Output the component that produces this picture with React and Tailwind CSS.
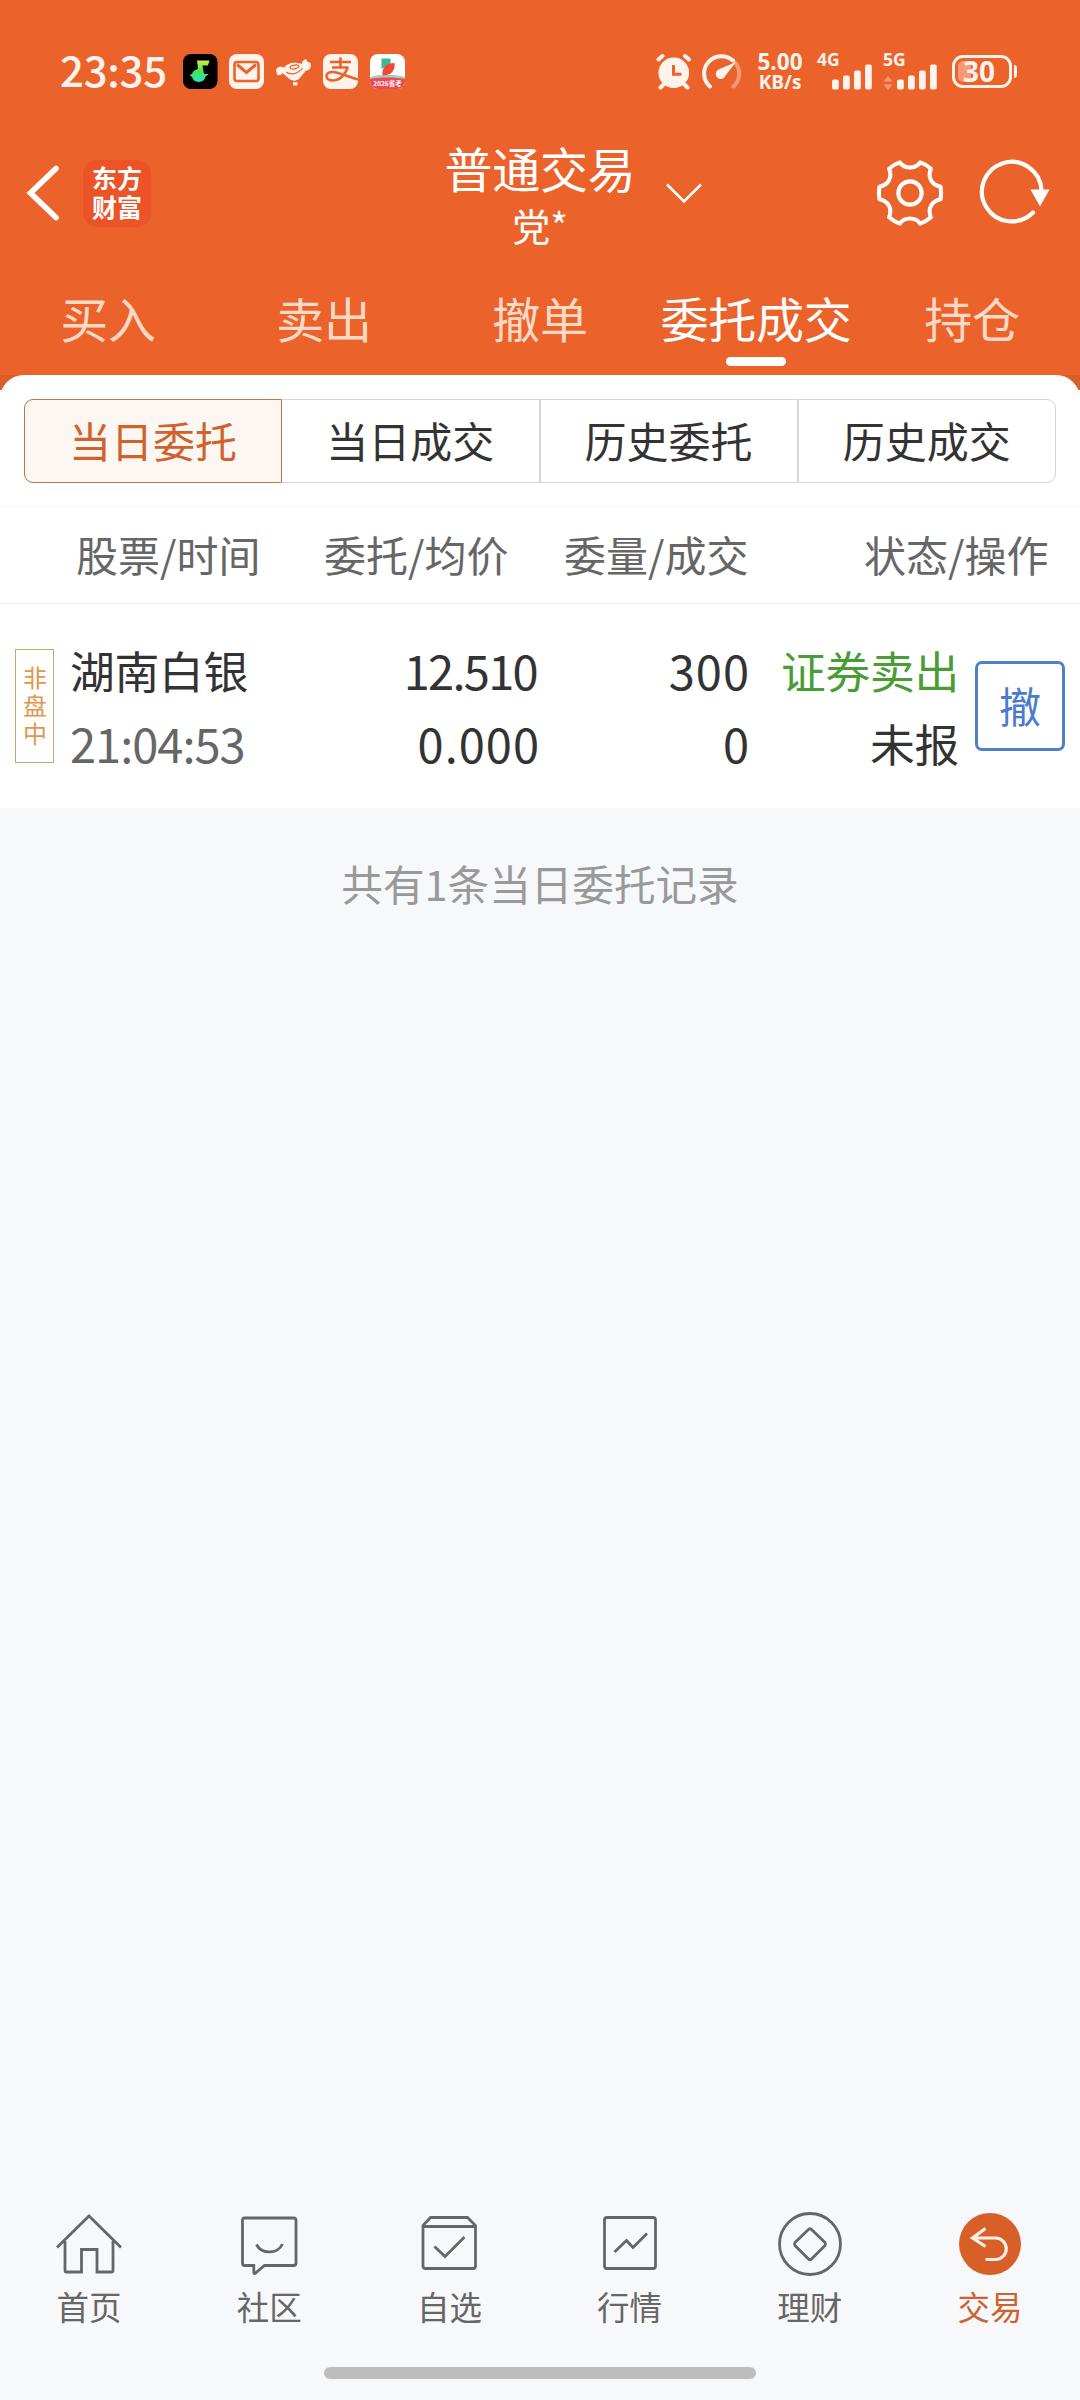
import React from "react";

const INK = "#fff3ec";

function SignalBars() {
  return (
    <svg width="40" height="26" viewBox="0 0 40 26" fill={INK}>
      <rect x="0" y="15.5" width="6.8" height="10" rx="2" />
      <rect x="11" y="11.5" width="6.8" height="14" rx="2" />
      <rect x="22" y="6.5" width="6.8" height="19" rx="2" />
      <rect x="33" y="0.5" width="6.8" height="25" rx="2" />
    </svg>
  );
}

function StatusBar() {
  return (
    <div className="flex h-[140px] justify-between pt-[50px] text-[#fff3ec]">
      <div className="flex h-[42px] items-center pl-[60px]">
        <span className="-mt-[5px] w-[123px] text-[42px] leading-[42px] font-medium tracking-[-0.3px]">23:35</span>
        <svg className="mr-[11px]" width="35" height="35" viewBox="0 0 35 35">
          <defs>
            <linearGradient id="note" x1="0" y1="0" x2="0" y2="1">
              <stop offset="0" stopColor="#d6ee3c" />
              <stop offset="0.5" stopColor="#4be04f" />
              <stop offset="1" stopColor="#1fe8c4" />
            </linearGradient>
          </defs>
          <rect width="34.500" height="35" rx="8" fill="#000" />
          <path d="M14 6.500H26.500L25 11.500H19.500L21 20H26L22.500 22.500A7 7 0 0 1 9 23L6.500 21 9 20A7 7 0 0 1 14 15.500L15 14Z" fill="url(#note)" />
        </svg>
        <svg className="mr-3" width="35" height="35" viewBox="0 0 35 35">
          <rect width="35" height="35" rx="8" fill={INK} />
          <rect x="5.500" y="8" width="24" height="19" rx="2.500" fill="none" stroke="#eb632b" strokeWidth="2.600" />
          <path d="M8 10.500L17.500 18.500 27 10.500" fill="none" stroke="#eb632b" strokeWidth="3" />
        </svg>
        <svg className="mr-3" width="35" height="35" viewBox="0 0 35 35" fill={INK}>
          <path d="M0 16.500c.5-3 3-4.500 6-3.500l2 .5c3-3.500 8-5.500 13-4.500l5 .8c0-2.600 2.500-5.300 4.500-4.300l.8 2.200 2.200.8c2 1 1.600 4 .5 6-1.500 2-3.500 2.200-4.200 2.200L23 25l-4.500 2-4.500-1.400L6.500 19c-1 2-3 2.700-5.300 2z" />
          <rect x="17" y="28" width="4.500" height="3.500" rx="1" />
          <ellipse cx="18.500" cy="13" rx="4.500" ry="1.900" transform="rotate(-10 18.500 13)" fill="none" stroke="#eb632b" strokeWidth="1.200" />
          <path d="M10 18c5 3.500 12 2 16.500-4" fill="none" stroke="#eb632b" strokeWidth="1.200" />
        </svg>
        <svg className="mr-3" width="35" height="35" viewBox="0 0 35 35">
          <rect width="35" height="35" rx="8" fill={INK} />
          <g fill="none" stroke="#eb632b" strokeWidth="2.600">
            <path d="M7 8h21M17.500 3.500v10M9 13.500h16.500" />
            <path d="M24.500 14c-2 6-7.500 12.500-14.500 12.500-4.500 0-6.500-2-6.500-4.300 0-2.500 2.500-4.200 6-4.200 6 0 13 4 25.500 7.500" />
          </g>
        </svg>
        <svg width="35" height="35" viewBox="0 0 35 35">
          <defs>
            <clipPath id="appClip"><rect width="35" height="35" rx="8" /></clipPath>
          </defs>
          <g clipPath="url(#appClip)">
            <rect width="35" height="35" fill="#fff" />
            <path d="M0 23c10-3 24-3 35 0v12H0z" fill="#a9c9c2" />
            <path d="M0 25c9-2 25-2 35 0v10H0z" fill="#ea4a58" />
            <path d="M11.500 4.500h9v5l-4 2.500-5 3z" fill="#3fb59b" />
            <path d="M12.500 21.500c-1-7 3-12.500 12-12.500 1 7-3 12.500-12 12.500z" fill="#ee4a33" />
          </g>
          <text x="17.500" y="32" fontSize="6.500" fontWeight="700" fill="#fff" textAnchor="middle">2026省考</text>
        </svg>
      </div>

      <div className="flex h-[42px] items-center pr-[63px]">
        <svg className="mr-[10px]" width="36" height="37" viewBox="0 0 36 37">
          <circle cx="17.800" cy="19.800" r="15.300" fill={INK} />
          <path d="M2.500 6.500L6.500 3M33 6.500L29 3M4.500 34.500L7.500 31.500M31.500 34.500L28.500 31.500" stroke={INK} strokeWidth="4" strokeLinecap="round" fill="none" />
          <path d="M17.500 12v9.200h8" stroke="#eb632b" strokeWidth="3" fill="none" />
        </svg>
        <svg className="mr-[14px]" width="40" height="37" viewBox="0 0 40 37" fill="none" strokeLinecap="round">
          <path d="M33.500 10A17.300 17.300 0 0 1 31.500 33.500" stroke="#f59a73" strokeWidth="4" />
          <path d="M8 33.500A17.300 17.300 0 0 1 31 7.500" stroke={INK} strokeWidth="4" />
          <path d="M34 9L23.500 22.500a5 5 0 1 1-7-6z" fill={INK} />
        </svg>
        <div className="mr-[13px] flex w-[48px] flex-col items-center font-['Open_Sans','Noto_Sans',sans-serif] font-bold">
          <span className="text-[22.5px] leading-[21px]">5.00</span>
          <span className="text-[19px] leading-[20px]">KB/s</span>
        </div>
        <div className="mr-[11px] flex w-[55px] flex-col">
          <span className="h-[11px] font-['Open_Sans','Noto_Sans',sans-serif] text-[17.5px] leading-[13px] font-bold">4G</span>
          <div className="flex justify-end"><SignalBars /></div>
        </div>
        <div className="mr-[15px] flex w-[54px] flex-col">
          <span className="h-[11px] font-['Open_Sans','Noto_Sans',sans-serif] text-[17.5px] leading-[13px] font-bold">5G</span>
          <div className="flex items-end justify-between">
            <svg width="10" height="14" viewBox="0 0 10 14" fill="#f59a73">
              <path d="M5 0l4.500 5.500h-9zM5 14l4.500-5.500h-9z" />
            </svg>
            <SignalBars />
          </div>
        </div>
        <div className="flex h-[33px] w-[60px] items-center justify-center rounded-[11px] border-[3px] border-[#fff3ec] p-[3px]">
          <div className="flex h-full w-full items-center justify-center rounded-[5px] bg-[linear-gradient(90deg,#f59a73_28%,transparent_28%)] pr-1.5 font-['Open_Sans','Noto_Sans',sans-serif] text-[28px] leading-[20px] font-bold">30</div>
        </div>
        <div className="ml-[2px] h-[13px] w-[3px] rounded-r bg-[#fff3ec]" />
      </div>
    </div>
  );
}

function TitleBar() {
  return (
    <div className="grid h-[116px] grid-cols-3 text-white">
      <div className="flex items-start pt-5 pl-[26px]">
        <svg className="mt-[3px]" width="34" height="60" viewBox="0 0 34 60" fill="none" stroke="#fff" strokeWidth="5.600" strokeLinecap="round">
          <path d="M30 5.500L4.500 30 30 54.500" strokeLinejoin="miter" />
        </svg>
        <div className="ml-[23px] flex h-[67px] w-[68px] flex-col items-center justify-center rounded-[14px] bg-[#ec5428] text-[25px] leading-[29px] font-bold">
          <span className="-mt-1">东方</span>
          <span>财富</span>
        </div>
      </div>
      <div className="flex items-start">
        <div className="-mt-[2px] ml-[72px] flex w-[216px] flex-col items-center text-[48px] leading-[58px] whitespace-nowrap">
          <span className="tracking-[-0.3px]">普通交易</span>
          <span className="text-[38px]">党*</span>
        </div>
        <svg className="mt-[41px] ml-[17px]" width="38" height="24" viewBox="0 0 38 24" fill="none" stroke="#fff" strokeWidth="2.600">
          <path d="M2 3.500L19 20.500 36 3.500" />
        </svg>
      </div>
      <div className="flex items-start pt-[19px] pl-[155px]">
        <svg width="70" height="68" viewBox="-36 -35 72 70" fill="none" stroke="#fff" strokeWidth="4.200" strokeLinejoin="round">
          <path d="M-21.500-25 Q-16.500-29.500-10.500-31.500 C-6-24.500 6-24.500 10.500-31.500 Q16.500-29.500 21.500-25 C18-16 22-8.500 31.500-6.500 Q32.500 0 31.500 6.500 C22 8.500 18 16 21.500 25 Q16.500 29.500 10.500 31.500 C6 24.500-6 24.500-10.500 31.500 Q-16.500 29.500-21.500 25 C-18 16-22 8.500-31.500 6.500 Q-32.500 0-31.500-6.500 C-22-8.500-18-16-21.500-25Z" />
          <circle r="12" />
        </svg>
        <svg className="ml-[33px]" width="74" height="68" viewBox="0 0 74 68" fill="none" stroke="#fff" strokeWidth="4.200" strokeLinecap="round">
          <path d="M55 53.500A29.800 29.800 0 1 1 63.500 31" />
          <path d="M52.500 30.500h19l-9.500 17z" fill="#fff" stroke="none" />
        </svg>
      </div>
    </div>
  );
}

const tabs = ["买入", "卖出", "撤单", "委托成交", "持仓"];

function Tabs() {
  return (
    <div className="grid h-[134px] grid-cols-5 pt-[37px]">
      {tabs.map((t) => (
        <div key={t} className="flex flex-col items-center">
          <span className={t === "委托成交" ? "text-[48px] leading-[48px] tracking-[-0.3px] whitespace-nowrap text-white" : "text-[48px] leading-[48px] tracking-[-0.3px] text-[#fed9c5]"}>{t}</span>
          {t === "委托成交" && <span className="mt-[16px] h-[9px] w-[60px] rounded-full bg-white" />}
        </div>
      ))}
    </div>
  );
}

function Segments() {
  const base = "flex h-[84px] flex-1 items-center justify-center border pb-0.5 text-[42px] leading-[42px]";
  return (
    <div className="flex px-6 pt-6">
      <div className={base + " rounded-l-[9px] border-[#bd7347] bg-[#fdf7f3] text-[#d0622b]"}>当日委托</div>
      <div className={base + " border-l-0 border-[#d6d6d6] text-[#333]"}>当日成交</div>
      <div className={base + " border-[#d6d6d6] text-[#333]"}>历史委托</div>
      <div className={base + " rounded-r-[9px] border-[#d6d6d6] text-[#333]"}>历史成交</div>
    </div>
  );
}

function OrderTable() {
  return (
    <>
      <div className="mt-[23px] flex h-[98px] items-center border-y border-t-[#f6f6f6] border-b-[#ebebeb] pb-0.5 pl-[76px] text-[42px] leading-[42px] whitespace-nowrap text-[#666]">
        <span className="w-[248px]">股票/时间</span>
        <span className="w-[240px]">委托/均价</span>
        <span className="w-[300px]">委量/成交</span>
        <span>状态/操作</span>
      </div>
      <div className="flex h-[204px] items-start text-[44.800px] leading-[73px] whitespace-nowrap text-[#333]">
        <div className="mt-[45px] ml-[15px] flex h-[114px] w-[39px] items-center justify-center border border-[#cda467] pt-[3px] text-[24px] leading-[24px] tracking-[4px] text-[#e2964b] [writing-mode:vertical-rl]">非盘中</div>
        <div className="mt-[29px] ml-4 flex w-[200px] flex-col">
          <span className="tracking-[-0.300px]">湖南白银</span>
          <span className="text-[47px] tracking-[-1px] text-[#666]">21:04:53</span>
        </div>
        <div className="mt-[29px] flex w-[270px] flex-col items-end text-[47px]">
          <span className="pr-[3px] tracking-[-1.7px]">12.510</span>
          <span className="tracking-[1px]">0.000</span>
        </div>
        <div className="mt-[29px] flex w-[210px] flex-col items-end text-[47px] tracking-[1px]">
          <span>300</span>
          <span>0</span>
        </div>
        <div className="mt-[29px] flex w-[209px] flex-col items-end tracking-[-0.3px]">
          <span className="text-[#4a9c35]">证券卖出</span>
          <span>未报</span>
        </div>
        <div className="mt-[57px] ml-[16px] flex h-[90px] w-[90px] items-center justify-center rounded-[7px] border-[3px] border-[#4f7fc9] pb-0.5 text-[42px] leading-[42px] text-[#4a7bd0]">撤</div>
      </div>
    </>
  );
}

const icons = {
  首页: (
    <>
      <path d="M4 34.500L36 3 68 34.500" transform="translate(0 1)" />
      <path d="M12 29V58.500Q12 60 13.500 60H28.500V37.500H44V60H58.500Q60 60 60 58.500V29" />
    </>
  ),
  社区: (
    <>
      <path d="M11.500 6H60.500Q63 6 63 8.500V51Q63 53.500 60.500 53.500H31.500L22 61.500Q20.800 62 20.800 60.500V53.500H11.500Q9.500 53.500 9.500 51V8.500Q9.500 6 11.500 6Z" />
      <path d="M23.500 32.500C28.500 42.500 44.500 42.500 49.500 32" />
    </>
  ),
  自选: (
    <>
      <path d="M10 13.500L17.500 5.500H54.500L62.500 13.500V54Q62.500 56.500 60 56.500H12.500Q10 56.500 10 54ZM10 14.500H62.500" />
      <path d="M21.500 34.500L32 44.500 51.500 25" />
    </>
  ),
  行情: (
    <>
      <rect x="10.500" y="5.500" width="51" height="51" rx="2.500" />
      <path d="M20.500 40L32.500 28.500 39 35.500 53 21.500" />
    </>
  ),
  理财: (
    <>
      <circle cx="36" cy="32" r="30.500" />
      <path d="M34.500 17.500Q36 16 37.500 17.500L51 30.500Q52 32 51 33.500L37.500 47Q36 48.500 34.500 47L21 33.500Q20 32 21 30.500Z" />
    </>
  ),
  交易: (
    <>
      <circle cx="36" cy="32" r="31" fill="#d95f28" stroke="none" />
      <path d="M31.500 16.500L18.500 26 31.500 34.500M19 26H42.500A10.800 10.800 0 0 1 42.500 47.500H31.500" stroke="#fff0e6" strokeWidth="3.200" />
    </>
  ),
};

function BottomNav() {
  return (
    <nav className="-ml-px grid grid-cols-6 text-[32.500px] leading-[34px]">
      {Object.keys(icons).map((name) => (
        <div key={name} className={name === "交易" ? "flex flex-col items-center text-[#cf6230]" : "flex flex-col items-center text-[#666]"}>
          <svg width="72" height="64" viewBox="0 0 72 64" fill="none" stroke="#666" strokeWidth="2.800">
            {icons[name]}
          </svg>
          <span className="mt-[13px]">{name}</span>
        </div>
      ))}
    </nav>
  );
}

export default function App() {
  return (
    <div className="flex h-[2400px] w-[1080px] flex-col overflow-hidden bg-[#f7f8fa] font-['Noto_Sans_CJK_SC','Noto_Sans',sans-serif]">
      <header className="h-[390px] shrink-0 bg-[linear-gradient(to_bottom,#eb632b_375px,#d75f29_375px)]">
        <StatusBar />
        <TitleBar />
        <Tabs />
      </header>
      <main className="-mt-[15px] h-[433px] shrink-0 rounded-t-[24px] bg-white">
        <Segments />
        <OrderTable />
      </main>
      <p className="mt-[54px] text-center text-[41.600px] leading-[42px] text-[#999]">共有1条当日委托记录</p>
      <div className="mt-auto h-[188px]">
        <BottomNav />
        <div className="mx-auto mt-[44px] h-3 w-[432px] rounded-full bg-[#bdbdbd]" />
      </div>
    </div>
  );
}
